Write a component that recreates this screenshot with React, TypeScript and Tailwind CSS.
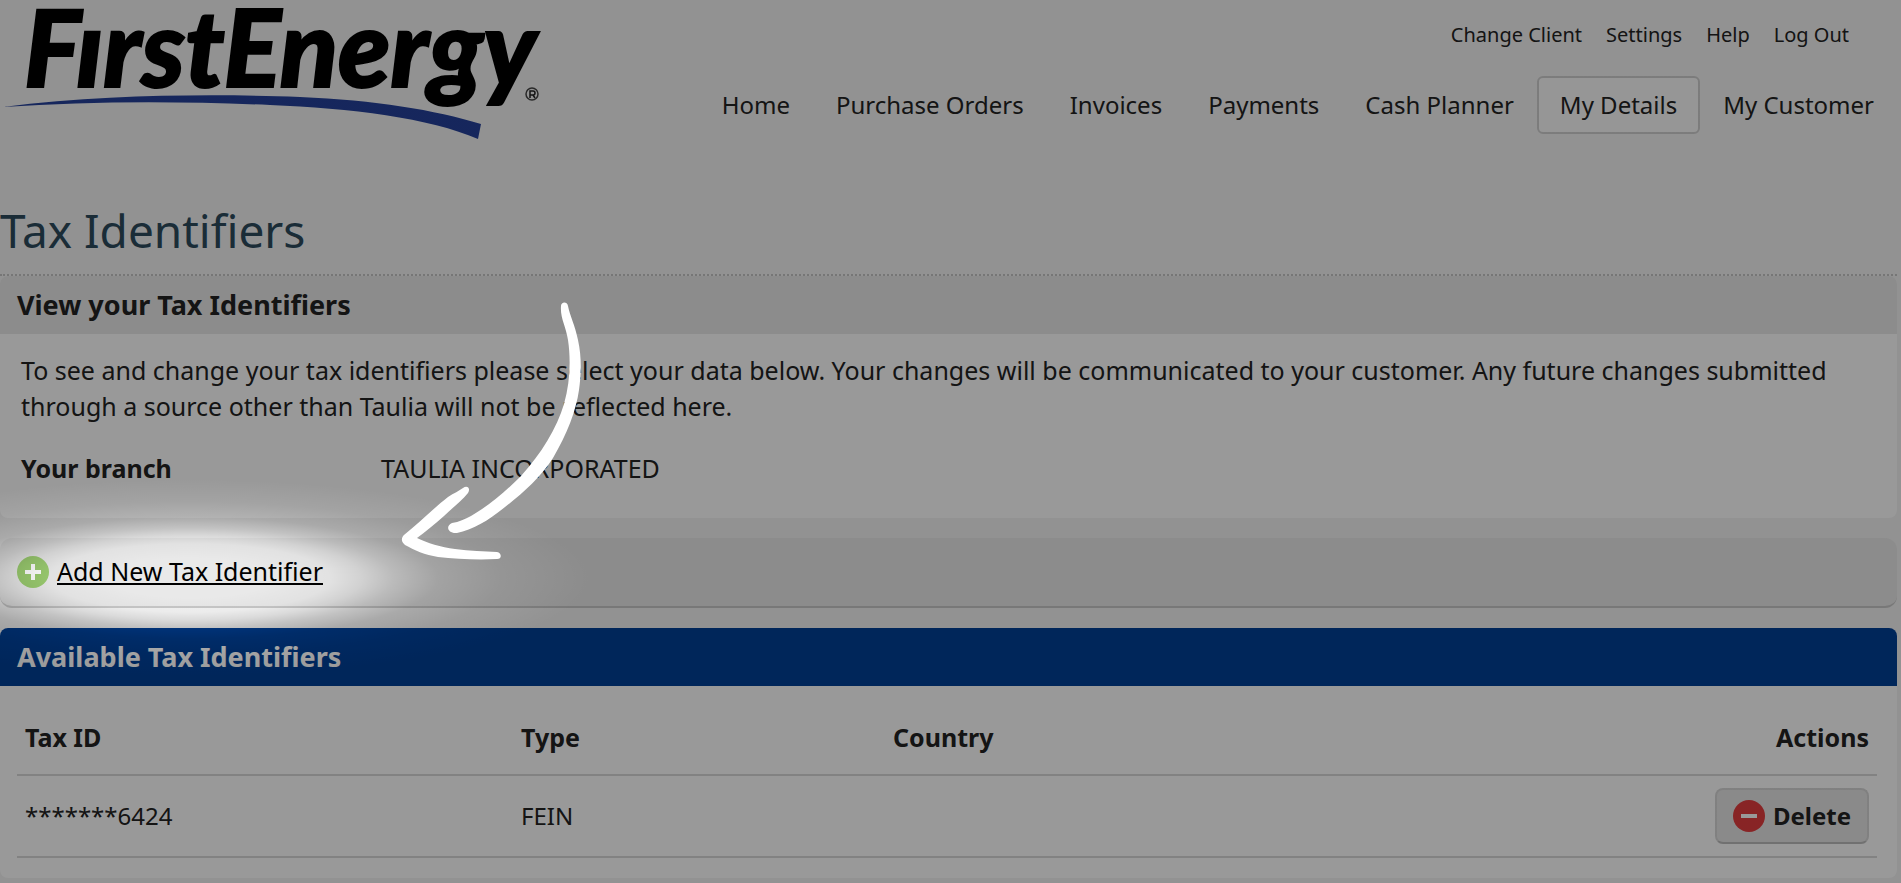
const utilityLinks = ["Change Client", "Settings", "Help", "Log Out"];

const navItems = ["Home", "Purchase Orders", "Invoices", "Payments", "Cash Planner", "My Details", "My Customer"];

const taxIds = [{ id: "*******6424", type: "FEIN", country: "" }];

function Logo() {
    return (
        <svg width="545" height="142" viewBox="0 0 545 142" role="img" aria-label="FirstEnergy" className="overflow-visible">
            <text x="24" y="87" stroke="#000" strokeWidth="2" className="fill-black font-['Lato',sans-serif] text-[107px] font-black italic">
                FırstEnergy
            </text>
            <path d="M3 107 C110 94 215 94 300 97 C375 100 435 110 481 124 L478 139 C430 118 350 108 270 105 C180 101 90 101 3 107Z" fill="#24409a" />
            <circle cx="532" cy="94" r="6" fill="none" stroke="#444" strokeWidth="1.5" />
            <path d="M530 98V91h3a2 2 0 0 1 0 4h-3m3 0 2 3" fill="none" stroke="#222" strokeWidth="1.5" />
        </svg>
    );
}

function PlusIcon() {
    return (
        <svg width="32" height="32" viewBox="0 0 32 32" aria-hidden="true">
            <circle cx="16" cy="16" r="16" fill="#9acb6f" />
            <path d="M16 8v16M8 16h16" stroke="#fff" strokeWidth="4" />
        </svg>
    );
}

function MinusIcon() {
    return (
        <svg width="32" height="32" viewBox="0 0 32 32" aria-hidden="true">
            <circle cx="16" cy="16" r="16" fill="#e23c3e" />
            <path d="M8 16h16" stroke="#fff" strokeWidth="4" />
        </svg>
    );
}

function Arrow() {
    return (
        <svg className="absolute left-[400px] top-[300px]" width="184" height="262" viewBox="400 300 184 262" fill="#fff" aria-hidden="true">
            <path d="M561 306 C561 302 567 301 568 306 C570 316 575 325 578 340 C582 358 581 375 579 390 C576 411 567 434 553 458 C540 478 522 494 505 507 C489 520 473 530 457 533 C448 534 445 526 452 523 C459 522 465 519 471 516 C490 505 506 491 521 476 C541 454 557 428 564 404 C570 383 571 360 568 340 C566 326 560 318 561 306Z" />
            <path d="M463 488 C467 485 471 488 468 493 C462 501 452 508 444 516 C435 524 425 532 417 538 C427 543 441 547 455 549 C470 551 484 551 497 552 C502 553 502 559 497 559 C478 560 456 559 438 557 C425 555 414 550 405 545 C401 542 401 538 404 535 C419 523 435 507 448 497 C454 493 459 491 463 488Z" />
        </svg>
    );
}

export default function App() {
    return (
        <div className="relative min-h-screen overflow-hidden bg-[#f3f3f3] font-['Noto_Sans',sans-serif] text-[25px] text-[#222]">
            <header className="flex h-[142px] items-start justify-between">
                <a href="#" className="shrink-0">
                    <Logo />
                </a>
                <div className="flex flex-col items-end pr-1">
                    <ul className="flex h-[76px] gap-6 pr-12 pt-5 text-xl leading-[30px]">
                        {utilityLinks.map((label) => (
                            <li key={label}>
                                <a href="#">{label}</a>
                            </li>
                        ))}
                    </ul>
                    <nav className="flex whitespace-nowrap text-2xl">
                        {navItems.map((label) => (
                            <a
                                key={label}
                                href="#"
                                className={
                                    label === "My Details"
                                        ? "rounded-md border-2 border-[#cfcfcf] bg-[#fafafa] px-[21px] py-3 leading-[30px]"
                                        : "border-2 border-transparent px-[21px] py-3 leading-[30px]"
                                }
                            >
                                {label}
                            </a>
                        ))}
                    </nav>
                </div>
            </header>

            <main className="mr-1">
                <h1 className="border-b-2 border-dotted border-[#c4c4c4] pb-3 pt-14 text-[46px] leading-[64px] text-[#2c4a5c]">Tax Identifiers</h1>

                <section className="mb-5 overflow-hidden rounded-lg bg-white">
                    <h2 className="bg-[#e9e9e9] px-[17px] py-3 text-[27px] font-bold leading-[34px]">View your Tax Identifiers</h2>
                    <div className="px-[21px] pb-8 pt-[18px]">
                        <p className="leading-9">
                            To see and change your tax identifiers please select your data below. Your changes will be communicated to your customer. Any future changes submitted
                            <br />
                            through a source other than Taulia will not be reflected here.
                        </p>
                        <dl className="flex pt-[26px] leading-9">
                            <dt className="w-[360px] font-bold">Your branch</dt>
                            <dd>TAULIA INCORPORATED</dd>
                        </dl>
                    </div>
                </section>

                <div className="mb-5 flex h-[70px] items-center rounded-xl border-b-2 border-[#c8c8c8] bg-[#e9e9e9] px-[17px]">
                    <a href="#" className="flex items-center gap-2 text-black underline decoration-2 underline-offset-2">
                        <PlusIcon />
                        Add New Tax Identifier
                    </a>
                </div>

                <section className="overflow-hidden rounded-lg bg-white">
                    <h2 className="bg-[#003f96] px-[17px] py-3 text-[27px] font-bold leading-[34px] text-white">Available Tax Identifiers</h2>
                    <div className="pb-5 pl-[17px] pr-5 pt-4">
                        <table className="w-full table-fixed text-left">
                            <thead>
                                <tr className="h-[73px] border-b-2 border-[#d8d8d8]">
                                    <th className="w-4/15 px-2">Tax ID</th>
                                    <th className="w-1/5 px-2">Type</th>
                                    <th className="px-2">Country</th>
                                    <th className="px-2 text-right">Actions</th>
                                </tr>
                            </thead>
                            <tbody>
                                {taxIds.map((tax) => (
                                    <tr key={tax.id} className="h-[82px] border-b-2 border-[#d8d8d8] text-2xl">
                                        <td className="px-2">{tax.id}</td>
                                        <td className="px-2">{tax.type}</td>
                                        <td className="px-2">{tax.country}</td>
                                        <td className="px-2">
                                            <button
                                                type="button"
                                                className="ml-auto flex h-14 items-center gap-2 rounded-lg border-2 border-[#d6d6d6] border-b-[#bcbcbc] bg-[#e6e6e6] px-4 font-bold"
                                            >
                                                <MinusIcon />
                                                Delete
                                            </button>
                                        </td>
                                    </tr>
                                ))}
                            </tbody>
                        </table>
                    </div>
                </section>
            </main>

            {/* dimmed backdrop with a spotlight on the add link */}
            <div className="pointer-events-none absolute inset-0 bg-[radial-gradient(ellipse_400px_98px_at_190px_578px,transparent_20%,rgba(0,0,0,0.03)_35%,rgba(0,0,0,0.1)_43%,rgba(0,0,0,0.2)_51%,rgba(0,0,0,0.3)_62%,rgba(0,0,0,0.36)_78%,rgba(0,0,0,0.4)_100%)]">
                <Arrow />
            </div>
        </div>
    );
}
